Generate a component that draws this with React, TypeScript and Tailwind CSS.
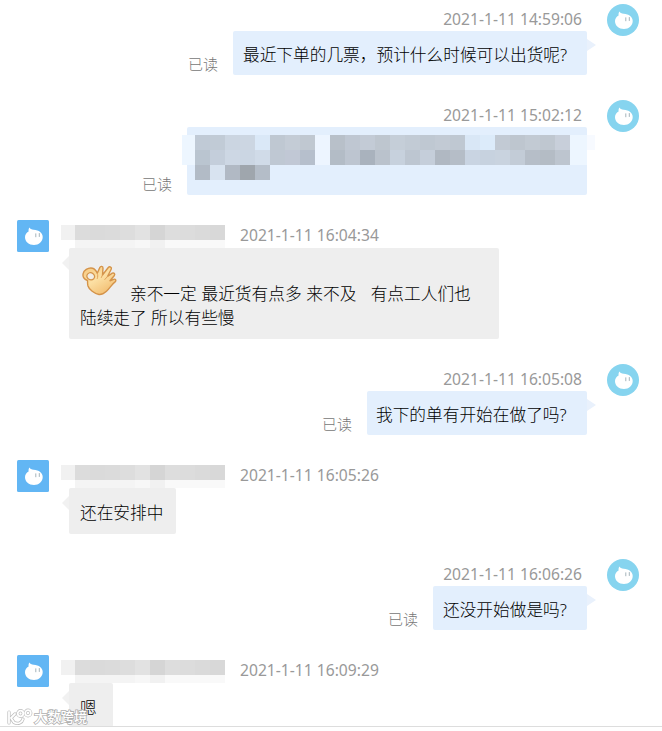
import React from 'react'

const bodyText = "font-['Noto_Sans','Noto_Sans_CJK_SC',sans-serif] font-light text-[16.7px] text-black whitespace-pre"

const Blob: React.FC<{ round?: boolean }> = ({ round }) => (
    <svg viewBox="0 0 32 32" className="size-8 shrink-0">
        {round ? (
            <circle cx="16" cy="16" r="16" fill="#86d4ef" />
        ) : (
            <rect width="32" height="32" rx="1.5" fill="#62b6f4" />
        )}
        <path
            d="M12.500 7.600c.6 1.500 2 2 4.200 2.100 5.200.2 9 3.100 9 7.300 0 4.700-3.900 8-8.700 8-5.100 0-9-3.200-9-7.700 0-2.500 1.300-4.500 3.600-5.800-.2-1.500.1-2.800.9-3.900z"
            fill="#fff"
        />
        <path d="M18.800 13.800v3M22.300 13.500v3" stroke="#a5b4bb" strokeWidth="1" strokeLinecap="round" />
    </svg>
)

const OkHand = () => (
    <svg viewBox="0 0 38 34" className="w-[38px] h-[34px] shrink-0">
        <defs>
            <linearGradient id="skin" x1="0" y1="0" x2="0.7" y2="1">
                <stop offset="0" stopColor="#f6c77c" />
                <stop offset="0.5" stopColor="#fce0a4" />
                <stop offset="1" stopColor="#f2bd70" />
            </linearGradient>
        </defs>
        <path
            d="M3 12C3.500 8.500 8 5.300 12.500 6.200c2.400.5 3.800 2.800 4.800 5L19.800 5.500c.8-1.700 3.300-1.500 3.200.6L22.500 13l5.800-7.500c1.400-1.600 3.900-.2 2.900 1.800L27.500 14.500l4.800-3.300c1.700-.9 3.200 1 1.900 2.500L30 18.800l3.700-1.500c1.900-.6 3 1.200 1.400 2.600-3.600 2.600-5.500 6.600-8.600 9.300-2.300 2-5.200 3.600-7.500 3.300C14.500 31.500 9 27.500 8 24c-.5-2-.5-4-.5-5.500C4.500 17.500 2.600 14.800 3 12z"
            fill="url(#skin)"
            stroke="#d4934a"
            strokeWidth="1.400"
            strokeLinejoin="round"
        />
        <path d="M7 13c1-2.300 3.800-3.100 5.800-1.500 1.800 1.500 2.200 3.700 1 5.200-1.500 1.300-3.700 1.300-5.300.3C7.200 16 6.500 14.600 7 13z" fill="#f1eee7" stroke="#d4934a" strokeWidth="1.200" />
        <path d="M17.300 11.200c.6 1.800.6 3.600 0 5.300M22.500 13l-1.200 2.500M27.500 14.500l-2.700 3" fill="none" stroke="#dfa35c" strokeWidth="1" strokeLinecap="round" />
    </svg>
)

const Time: React.FC<{ children: string }> = ({ children }) => (
    <span className="font-['Noto_Sans',sans-serif] text-[15.65px] leading-5 text-[#999] whitespace-nowrap">{children}</span>
)

interface SentProps {
    time: string
    wide?: string
    className: string
    children: React.ReactNode
    tail?: boolean
}

const Sent: React.FC<SentProps> = ({ time, wide = 'h-11', className, children, tail = true }) => (
    <div className={`flex justify-end pr-[23px] ${className}`}>
        <div className="flex flex-col items-end">
            <div className="flex items-start pr-[5px] pt-[5px] h-[27px]"><Time>{time}</Time></div>
            <div className="flex items-end">
                <span className="mr-[15px] mb-px font-['Noto_Sans_CJK_SC',sans-serif] font-light text-[15px] leading-5 text-[#777]">已读</span>
                <div className={`relative bg-[#e3effd] rounded-xs ${wide}`}>
                    {children}
                    {tail && (
                        <span className="absolute left-full top-2 border-y-[6px] border-l-[9px] border-y-transparent border-l-[#e9f1fc]" />
                    )}
                </div>
            </div>
        </div>
        <div className="ml-5"><Blob round /></div>
    </div>
)

const nameCells = ['bg-[#dcdcdc]', 'bg-[#dadada]', 'bg-[#dbdbdb]', 'bg-[#dddddd]', 'bg-[#e2e2e2]', 'bg-[#d5d5d5]', 'bg-[#dddddd]', 'bg-[#dcdcdc]', 'bg-[#dadada]', 'bg-[#d8d8d8]']

const BlurredName = () => (
    <div className="ml-3 mt-[5px] w-[164px]">
        <div className="flex h-[15px]">
            <div className="w-3.5 bg-[#f1f1f1]" />
            {nameCells.map((color, i) => (
                <div key={i} className={`w-[15px] ${color}`} />
            ))}
        </div>
        <div className="flex h-2 ml-3.5">
            <div className="w-[60px] bg-[#f4f4f4]" />
            <div className="w-[15px] bg-[#f7f7f7]" />
            <div className="w-[15px] bg-[#f1f1f1]" />
            <div className="w-[60px] bg-[#f9f9f9]" />
        </div>
    </div>
)

interface ReceivedProps {
    time: string
    className: string
    bubble: string
    children: React.ReactNode
}

const Received: React.FC<ReceivedProps> = ({ time, className, bubble, children }) => (
    <div className={`pl-[17px] ${className}`}>
        <div className="flex h-7 items-start">
            <Blob />
            <BlurredName />
            <div className="ml-[15px] mt-[5px] flex"><Time>{time}</Time></div>
        </div>
        <div className={`relative ml-[52px] bg-[#eee] rounded-xs ${bubble}`}>
            {children}
            <span className="absolute right-full top-2 border-y-[7px] border-r-[7px] border-y-transparent border-r-[#f1f1f1]" />
        </div>
    </div>
)

const clear = '#edf5ff'
const mosaic = [
    ['#c0cad6', '#c1cbd6', '#cbd5e1', '#ccd6e2', '#dae8f7', '#bfc8d2', '#c4ccd6', '#c0c8d1', clear, '#b8c0c9', '#bfc7d2', '#c3cbd6', '#bec6cf', '#c5ced8', '#c2cbd5', '#bfc8d2', '#c2cad4', '#bfc8d2', '#d9e7f6', '#dcebfa', '#c2cad4', '#bec6cf', '#c2cad3', '#bfc7d0', '#c8cfda'],
    ['#bac5d0', '#c4cedb', '#cdd7e4', '#cbd6e3', '#d0dbe8', '#bfc8d3', '#c1c8d5', '#b6bfcc', clear, '#b3bcc6', '#bdc5d0', '#a9b2bd', '#bac2cc', '#c7d1dd', '#bdc6d1', '#c5ceda', '#b0b8c2', '#b5bdc7', '#c9d4e2', '#c7d2df', '#c9d3df', '#c3ccd7', '#b6bec8', '#b4bcc5', '#bdc5cf'],
    ['#b2bbc6', '#d8e3f0', '#b1b9c4', '#9fa6ad', '#b4bdc8'],
]

const HiddenMessage = () => (
    <div className="pl-2 pt-2">
        {mosaic.map((row, y) => (
            <div key={y} className="flex h-[15px]">
                {row.map((color, x) => (
                    <div key={x} className="w-[15px]" style={{ backgroundColor: color }} />
                ))}
            </div>
        ))}
    </div>
)

const Watermark = () => (
    <div className="absolute left-[7px] top-[707px] flex items-center h-5">
        <svg viewBox="0 0 26 18" className="w-[26px] h-[18px]" fill="none" strokeLinecap="round" strokeLinejoin="round">
            <g stroke="#bdbdbd" strokeWidth="3.200">
                <path d="M2 4v11M8 6L4 10l3 4.500c4 2 8 .5 9-3.500" />
                <circle cx="13.500" cy="5.500" r="2.800" />
                <circle cx="21" cy="5" r="2.800" />
            </g>
            <g stroke="#fff" strokeWidth="1.800">
                <path d="M2 4v11M8 6L4 10l3 4.500c4 2 8 .5 9-3.500" />
                <circle cx="13.500" cy="5.500" r="2.800" />
                <circle cx="21" cy="5" r="2.800" />
            </g>
        </svg>
        <span className="ml-px font-['Noto_Sans_CJK_SC',sans-serif] font-medium text-[13.3px] leading-5 text-white [-webkit-text-stroke:1.6px_#b0b0b0] [paint-order:stroke_fill]">大数跨境</span>
    </div>
)

const App: React.FC = () => {
    return (
        <div className="relative w-[662px] h-[731px] overflow-hidden bg-white">
            <div className="h-[727px] overflow-hidden border-b border-[#ddd] pt-1">
                <Sent time="2021-1-11 14:59:06" className="h-24">
                    <p className={`${bodyText} leading-[48px] pl-2.5 w-[354px]`}>最近下单的几票，预计什么时候可以出货呢?</p>
                </Sent>
                <Sent time="2021-1-11 15:02:12" wide="h-[68px] w-[400px]" tail={false} className="h-[120px]">
                    <div className="absolute -left-[5px] top-2 w-[405px] h-[30px] bg-[#edf6ff]" />
                    <div className="absolute left-full top-2 w-2 h-[15px] bg-[#f7faff]" />
                    <div className="relative"><HiddenMessage /></div>
                </Sent>
                <Received time="2021-1-11 16:04:34" className="h-36" bubble="w-[430px] h-[91px] pt-3.5 pl-[11px]">
                    <div className="flex items-start h-11">
                        <OkHand />
                        <p className={`${bodyText} leading-6 ml-3 mt-5 [word-spacing:0.4px]`}>亲不一定 最近货有点多 来不及   有点工人们也</p>
                    </div>
                    <p className={`${bodyText} leading-6`}>陆续走了 所以有些慢</p>
                </Received>
                <Sent time="2021-1-11 16:05:08" className="h-24">
                    <p className={`${bodyText} leading-[48px] pl-[9px] w-[220px]`}>我下的单有开始在做了吗?</p>
                </Sent>
                <Received time="2021-1-11 16:05:26" className="h-[99px]" bubble="w-[107px] h-[46px]">
                    <p className={`${bodyText} leading-[50px] pl-[11px]`}>还在安排中</p>
                </Received>
                <Sent time="2021-1-11 16:06:26" className="h-24">
                    <p className={`${bodyText} leading-[48px] pl-2.5 w-[154px]`}>还没开始做是吗?</p>
                </Sent>
                <Received time="2021-1-11 16:09:29" className="h-[72px]" bubble="w-11 h-11">
                    <p className={`${bodyText} leading-[50px] pl-[11px]`}>嗯</p>
                </Received>
            </div>
            <Watermark />
        </div>
    )
}

export default App
